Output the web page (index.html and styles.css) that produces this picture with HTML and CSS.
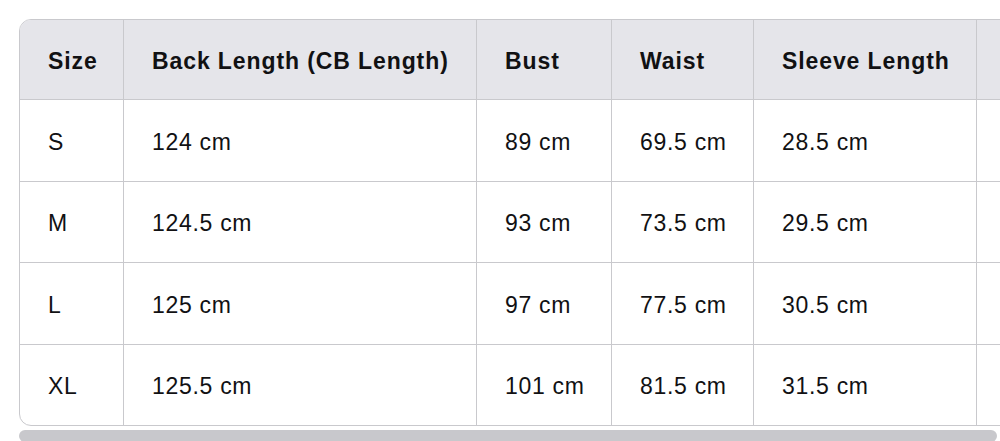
FILE: index.html
```html
<!DOCTYPE html>
<html lang="en">
<head>
<meta charset="utf-8">
<title>Size Chart</title>
<link rel="stylesheet" href="styles.css">
</head>
<body>
<div class="sheet">
  <div class="table-wrap">
    <table class="size-table">
      <colgroup>
        <col class="c1"><col class="c2"><col class="c3"><col class="c4"><col class="c5"><col class="c6">
      </colgroup>
      <thead>
        <tr>
          <th>Size</th>
          <th>Back Length (CB Length)</th>
          <th>Bust</th>
          <th>Waist</th>
          <th>Sleeve Length</th>
          <th></th>
        </tr>
      </thead>
      <tbody>
        <tr><td>S</td><td>124 cm</td><td>89 cm</td><td>69.5 cm</td><td>28.5 cm</td><td></td></tr>
        <tr><td>M</td><td>124.5 cm</td><td>93 cm</td><td>73.5 cm</td><td>29.5 cm</td><td></td></tr>
        <tr><td>L</td><td>125 cm</td><td>97 cm</td><td>77.5 cm</td><td>30.5 cm</td><td></td></tr>
        <tr><td>XL</td><td>125.5 cm</td><td>101 cm</td><td>81.5 cm</td><td>31.5 cm</td><td></td></tr>
      </tbody>
    </table>
  </div>
  <div class="scrollbar"></div>
</div>
</body>
</html>
```

FILE: styles.css
```css
html, body {
  margin: 0;
  padding: 0;
  background: #ffffff;
  overflow: hidden;
}

body {
  width: 1000px;
  height: 441px;
  font-family: "Liberation Sans", Arial, sans-serif;
  color: #111113;
}

.sheet {
  padding: 19px 0 0 19px;
  width: 1180px;
}

.table-wrap {
  border: 1px solid #c9c9cd;
  border-radius: 12px;
  overflow: hidden;
  width: 1140px;
}

.size-table {
  border-collapse: separate;
  border-spacing: 0;
  table-layout: fixed;
  width: 1140px;
}

.c1 { width: 104px; }
.c2 { width: 353px; }
.c3 { width: 135px; }
.c4 { width: 142px; }
.c5 { width: 223px; }
.c6 { width: 183px; }

.size-table th,
.size-table td {
  text-align: left;
  padding: 2px 0 0 28px;
  border-right: 1px solid #c9c9cd;
  border-bottom: 1px solid #c9c9cd;
  font-size: 23px;
  line-height: 26px;
  white-space: nowrap;
}

.size-table th {
  background: #e5e5ea;
  font-weight: bold;
  letter-spacing: 0.9px;
  height: 77px;
}

.size-table td {
  height: 77.5px;
  padding-top: 3px;
  font-weight: normal;
  letter-spacing: 0.7px;
}

.size-table tbody tr:last-child td {
  border-bottom: none;
}

.size-table th:last-child,
.size-table td:last-child {
  border-right: none;
}

.scrollbar {
  margin-top: 4px;
  width: 978px;
  height: 12px;
  background: #c8c8cc;
  border-radius: 6px;
}
```
